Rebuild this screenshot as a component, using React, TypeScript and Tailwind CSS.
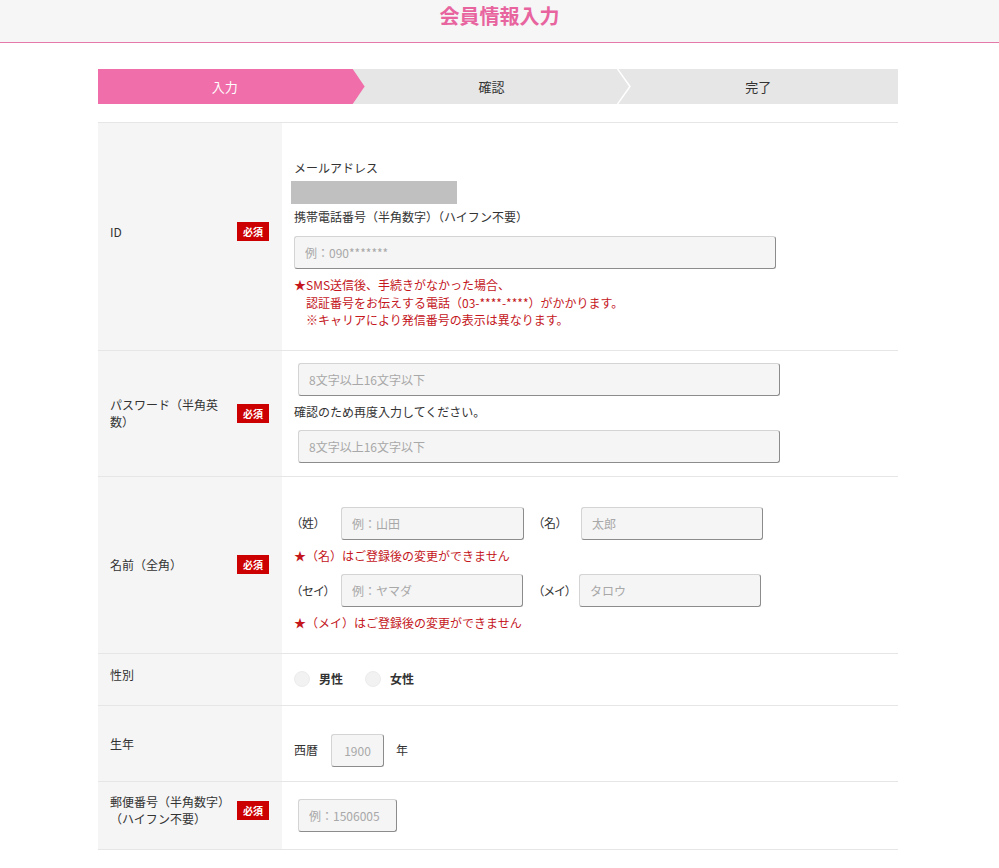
import { ReactNode } from 'react'

const font = { fontFamily: '"Noto Sans CJK JP", "Noto Sans", sans-serif' }

const inputCls =
  'h-[33px] rounded-[3px] border border-[#d4d4d4] border-r-[#8c8c8c] border-b-[#8c8c8c] bg-[#f5f5f5] px-[10px] text-[12px] text-[#333] outline-none placeholder:text-[#a8a8a8]'

const Badge = () => (
  <span className="flex h-[19px] w-[32px] shrink-0 items-center justify-center bg-[#cc0000] text-[10px] font-bold text-white">
    必須
  </span>
)

interface RowProps {
  label: ReactNode
  required?: boolean
  children: ReactNode
  contentClass?: string
  labelClass?: string
}

const Row = ({ label, required, children, contentClass, labelClass }: RowProps) => (
  <div className="flex border-b border-[#e6e6e6]">
    <div
      className={`flex w-[184px] shrink-0 items-center justify-between bg-[#f5f5f5] pl-[12px] pr-[13px] ${labelClass ?? ''}`}
    >
      <div className="w-[122px] text-[12px] leading-[17px] text-[#333]">{label}</div>
      {required && <Badge />}
    </div>
    <div className={`flex-1 pl-[12px] text-[12px] text-[#333] ${contentClass ?? ''}`}>{children}</div>
  </div>
)

const Note = ({ children }: { children: ReactNode }) => (
  <p className="text-[12px] leading-[17.5px] text-[#c4161c]">{children}</p>
)

const Step = ({ label, active, chevron }: { label: string; active?: boolean; chevron?: boolean }) => (
  <div
    className={`relative flex flex-1 items-center justify-center pr-[13px] ${
      active
        ? 'bg-[#f06ea9] text-white [clip-path:polygon(0_0,calc(100%_-_12px)_0,100%_50%,calc(100%_-_12px)_100%,0_100%)]'
        : 'text-[#333]'
    }`}
  >
    {label}
    {chevron && (
      <svg className="absolute right-0 top-0 h-[35px] w-[14px]" viewBox="0 0 14 35">
        <polyline points="0.5,0 13,17.5 0.5,35" fill="none" stroke="#fff" strokeWidth="1.5" />
      </svg>
    )}
  </div>
)

const NameLabel = ({ children, className }: { children: ReactNode; className: string }) => (
  <span className={`shrink-0 whitespace-nowrap [font-feature-settings:'palt'] ${className}`}>{children}</span>
)

const App = () => {
  return (
    <div className="min-h-screen bg-white" style={font}>
      <header className="flex h-[43px] justify-center border-b border-[#e47aa9] bg-[#f6f6f6] pt-[4px]">
        <h1 className="text-[20px] font-bold leading-[24px] text-[#e8649f]">会員情報入力</h1>
      </header>

      <div className="ml-[98px] mt-[26px] w-[800px]">
        <div className="flex h-[35px] bg-[#e6e6e6] text-[13px]">
          <Step label="入力" active />
          <Step label="確認" chevron />
          <Step label="完了" />
        </div>

        <div className="mt-[18px] border-t border-[#e6e6e6]">
          <Row label="ID" required labelClass="pb-[10px]" contentClass="pt-[36px] pb-[21px]">
            <p className="leading-[18px]">メールアドレス</p>
            <div className="-ml-[3px] mt-[4px] h-[23px] w-[166px] bg-[#c0c0c0]" />
            <p className="mt-[4px] leading-[18px]">携帯電話番号（半角数字）（ハイフン不要）</p>
            <input className={`${inputCls} mt-[10px] w-[482px]`} placeholder="例：090*******" />
            <div className="mt-[7px]">
              <Note>★SMS送信後、手続きがなかった場合、</Note>
              <Note>　認証番号をお伝えする電話（03-****-****）がかかります。</Note>
              <Note>　※キャリアにより発信番号の表示は異なります。</Note>
            </div>
          </Row>

          <Row label="パスワード（半角英数）" required contentClass="pt-[12px] pb-[13px]">
            <input className={`${inputCls} ml-[4px] w-[482px]`} placeholder="8文字以上16文字以下" />
            <p className="mt-[7px] leading-[18px]">確認のため再度入力してください。</p>
            <input className={`${inputCls} ml-[4px] mt-[9px] w-[482px]`} placeholder="8文字以上16文字以下" />
          </Row>

          <Row label="名前（全角）" required contentClass="pt-[30px] pb-[21px]">
            <div className="flex items-center">
              <NameLabel className="w-[47px] pl-[2px]">（姓）</NameLabel>
              <input className={`${inputCls} h-[32px] w-[183px]`} placeholder="例：山田" />
              <NameLabel className="ml-[14px] w-[43px]">（名）</NameLabel>
              <input className={`${inputCls} h-[32px] w-[182px]`} placeholder="太郎" />
            </div>
            <div className="mt-[7px]">
              <Note>★（名）はご登録後の変更ができません</Note>
            </div>
            <div className="mt-[10px] flex items-center">
              <NameLabel className="w-[47px] pl-[2px]">（セイ）</NameLabel>
              <input className={`${inputCls} h-[32px] w-[182px]`} placeholder="例：ヤマダ" />
              <NameLabel className="ml-[15px] w-[41px]">（メイ）</NameLabel>
              <input className={`${inputCls} h-[32px] w-[182px]`} placeholder="タロウ" />
            </div>
            <div className="mt-[7px]">
              <Note>★（メイ）はご登録後の変更ができません</Note>
            </div>
          </Row>

          <Row label="性別" labelClass="pb-[10px]" contentClass="flex h-[51px] items-center">
            <label className="flex items-center gap-[9px]">
              <input
                type="radio"
                name="sex"
                className="h-[16px] w-[16px] appearance-none rounded-full border border-[#ececec] bg-[#f2f2f2]"
              />
              <span className="font-bold">男性</span>
            </label>
            <label className="ml-[22px] flex items-center gap-[9px]">
              <input
                type="radio"
                name="sex"
                className="h-[16px] w-[16px] appearance-none rounded-full border border-[#ececec] bg-[#f2f2f2]"
              />
              <span className="font-bold">女性</span>
            </label>
          </Row>

          <Row label="生年" contentClass="flex h-[75px] items-center pt-[14px]">
            <span>西暦</span>
            <input className={`${inputCls} ml-[13px] h-[32px] w-[53px] px-0 text-center`} placeholder="1900" />
            <span className="ml-[12px]">年</span>
          </Row>

          <Row
            label={
              <>
                郵便番号（半角数字）
                <br />
                （ハイフン不要）
              </>
            }
            required
            labelClass="pb-[10px]"
            contentClass="flex h-[67px] items-center"
          >
            <input className={`${inputCls} ml-[4px] h-[32px] w-[99px]`} placeholder="例：1506005" />
          </Row>
        </div>
      </div>
    </div>
  )
}

export default App
